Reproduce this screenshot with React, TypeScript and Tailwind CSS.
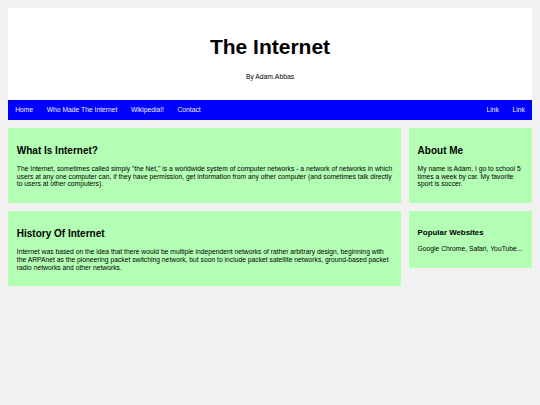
import React from 'react'

const NAV_LEFT = ['Home', 'Who Made The Internet', 'Wikipedia!!', 'Contact']
const NAV_RIGHT = ['Link', 'Link']

function Card({ children }: { children: React.ReactNode }) {
  return <div className="mt-[8.4px] bg-[#b3ffb3] px-[8.4px] py-[8.4px]">{children}</div>
}

export default function App() {
  return (
    <div className="min-h-[405px] bg-[#f1f1f1] p-[8.4px] font-['Liberation_Sans',Arial,sans-serif] text-black">
      {/* Header */}
      <div className="bg-white py-[12.6px] text-center">
        <h1 className="my-[14px] text-[21px] font-bold leading-[1.15]">The Internet</h1>
        <p className="mb-[6.7px] text-[6.75px] leading-[1.15]">By Adam.Abbas</p>
      </div>

      {/* Nav */}
      <nav className="flex bg-[#0000ff] text-[6.75px] leading-[1.15] text-[#f2f2f2]">
        {NAV_LEFT.map((item) => (
          <a key={item} className="px-[6.75px] py-[5.9px]">
            {item}
          </a>
        ))}
        <div className="flex-1" />
        {NAV_RIGHT.map((item, i) => (
          <a key={i} className="px-[6.75px] py-[5.9px]">
            {item}
          </a>
        ))}
      </nav>

      {/* Content */}
      <div className="flex">
        <div className="w-3/4">
          <Card>
            <h2 className="my-[8.4px] text-[10px] font-bold leading-[1.15]">What Is Internet?</h2>
            <p className="mb-[6.7px] text-[6.75px] leading-[1.15]">
              The Internet, sometimes called simply "the Net," is a worldwide system of computer networks - a
              network of networks in which users at any one computer can, if they have permission, get information
              from any other computer (and sometimes talk directly to users at other computers).
            </p>
          </Card>
          <Card>
            <h2 className="my-[8.4px] text-[10px] font-bold leading-[1.15]">History Of Internet</h2>
            <p className="mb-[6.7px] text-[6.75px] leading-[1.15]">
              Internet was based on the idea that there would be multiple independent networks of rather arbitrary
              design, beginning with the ARPAnet as the pioneering packet switching network, but soon to include
              packet satellite networks, ground-based packet radio networks and other networks.
            </p>
          </Card>
        </div>
        <div className="w-1/4 pl-[8.4px]">
          <Card>
            <h2 className="my-[8.4px] text-[10px] font-bold leading-[1.15]">About Me</h2>
            <p className="mb-[6.7px] text-[6.75px] leading-[1.15]">
              My name is Adam, I go to school 5 times a week by car. My favorite sport is soccer.
            </p>
          </Card>
          <Card>
            <h3 className="my-[7.9px] text-[7.9px] font-bold leading-[1.15]">Popular Websites</h3>
            <p className="mb-[6.7px] text-[6.75px] leading-[1.15]">Google Chrome, Safari, YouTube...</p>
          </Card>
        </div>
      </div>
    </div>
  )
}
